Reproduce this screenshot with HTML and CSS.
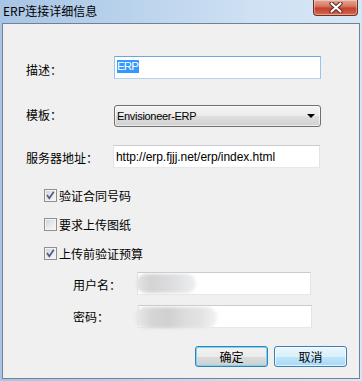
FILE: index.html
```html
<!DOCTYPE html>
<html>
<head>
<meta charset="utf-8">
<link rel="stylesheet" href="styles.css">
</head>
<body>
<div class="window">
  <div class="titlebar">
    <span class="title">ERP连接详细信息</span>
    <span class="close">
      <svg width="14" height="11" viewBox="0 0 14 11">
        <path d="M2.5 1.5 L11.5 9.5 M11.5 1.5 L2.5 9.5" stroke="#5a2a22" stroke-width="4.2" stroke-linecap="round" fill="none"/>
        <path d="M2.5 1.5 L11.5 9.5 M11.5 1.5 L2.5 9.5" stroke="#ffffff" stroke-width="2.2" stroke-linecap="round" fill="none"/>
      </svg>
    </span>
  </div>
  <div class="client">
    <div class="row r-desc">
      <span class="lbl w88 lbl-down">描述：</span>
      <div class="input focus w207"><span class="selected">ERP</span></div>
    </div>
    <div class="row r-tpl">
      <span class="lbl w88 lbl-up">模板：</span>
      <div class="combo">
        <span class="combo-text">Envisioneer-ERP</span>
        <span class="arrow"></span>
      </div>
    </div>
    <div class="row r-url">
      <span class="lbl w87 lbl-down1">服务器地址：</span>
      <div class="input w207 plain"><span class="url">http://erp.fjjj.net/erp/index.html</span></div>
    </div>
    <div class="row chk r-c1">
      <span class="cb">
        <svg width="11" height="11" viewBox="0 0 11 11"><path d="M2 5 L4.3 8.2 L8.8 1.8" stroke="#4b5c88" stroke-width="1.7" fill="none"/></svg>
      </span>
      <span class="chk-text">验证合同号码</span>
    </div>
    <div class="row chk r-c2">
      <span class="cb"></span>
      <span class="chk-text">要求上传图纸</span>
    </div>
    <div class="row chk r-c3">
      <span class="cb">
        <svg width="11" height="11" viewBox="0 0 11 11"><path d="M2 5 L4.3 8.2 L8.8 1.8" stroke="#4b5c88" stroke-width="1.7" fill="none"/></svg>
      </span>
      <span class="chk-text">上传前验证预算</span>
    </div>
    <div class="row r-user">
      <span class="lbl w64 lbl-down1">用户名：</span>
      <div class="input w174 plain"><span class="blur blur-user"></span></div>
    </div>
    <div class="row r-pass">
      <span class="lbl w65">密码：</span>
      <div class="input w174 plain"><span class="blur blur-pass"></span></div>
    </div>
    <div class="row r-btns">
      <span class="btn btn-ok">确定</span>
      <span class="btn btn-cancel">取消</span>
    </div>
  </div>
</div>
</body>
</html>
```

FILE: styles.css
```css
* { box-sizing: border-box; }
html, body { margin: 0; padding: 0; }
body {
  width: 362px;
  height: 381px;
  overflow: hidden;
  font-family: "Noto Sans CJK SC", "Liberation Sans", sans-serif;
  font-size: 12px;
  color: #000;
  background: #c3d8ee;
}
.window {
  width: 362px;
  height: 381px;
  display: flex;
  flex-direction: column;
  background: linear-gradient(90deg, #a8c5e5 0%, #b9d2ec 35%, #cfe1f3 70%, #d6e6f5 100%);
}
.titlebar {
  height: 23px;
  flex: none;
  display: flex;
  justify-content: space-between;
  align-items: flex-start;
}
.title {
  padding: 3px 0 0 3px;
  line-height: 16px;
  font-size: 12px;
  color: #000;
}
.close {
  width: 45px;
  height: 16px;
  margin-right: 4px;
  border: 1px solid #6e2f25;
  border-top: none;
  border-radius: 0 0 4px 4px;
  background: linear-gradient(#e6a596 0%, #d77a66 40%, #c3432b 55%, #cf5a40 85%, #d97058 100%);
  box-shadow: inset 0 0 0 1px rgba(255, 255, 255, 0.35);
  display: flex;
  align-items: center;
  justify-content: center;
  padding-bottom: 1px;
}
.client {
  flex: none;
  height: 356px;
  margin: 0 2px;
  border: 1px solid #6f8299;
  background: #f0f0f0;
  display: flex;
  flex-direction: column;
}
.row {
  display: flex;
  align-items: center;
  flex: none;
}
.lbl { flex: none; line-height: 16px; }
.lbl-down { padding-top: 4px; }
.lbl-down1 { padding-top: 2px; }
.lbl-up { padding-bottom: 3px; }
.w88 { width: 88px; }
.w87 { width: 87px; }
.w64 { width: 64px; }
.w65 { width: 65px; }
.w207 { width: 207px; }
.w174 { width: 174px; }

.r-desc { margin-top: 32px; height: 23px; padding-left: 23px; }
.r-tpl { margin-top: 26px; height: 22px; padding-left: 23px; }
.r-url { margin-top: 18px; height: 23px; padding-left: 23px; }
.chk { height: 17px; padding-left: 41px; }
.r-c1 { margin-top: 19px; }
.r-c2 { margin-top: 12px; }
.r-c3 { margin-top: 12px; }
.r-user { margin-top: 10px; height: 23px; padding-left: 70px; }
.r-pass { margin-top: 10px; height: 23px; padding-left: 70px; }
.r-btns { margin-top: 18px; height: 21px; justify-content: flex-end; padding-right: 12px; gap: 6px; }

.input {
  position: relative;
  height: 23px;
  background: #fff;
  border: 1px solid;
  display: flex;
  align-items: center;
  padding-left: 2px;
  font-family: "Liberation Sans", sans-serif;
  color: #000;
}
.plain { border-color: #c9cbd0 #e2e3e6 #e6e8eb #e2e3e6; }
.focus { border-color: #6fa6dc #9cc4ea #b3d3f0 #9cc4ea; }
.selected {
  background: #3399ff;
  color: #fff;
  font-size: 11.5px;
  letter-spacing: -0.9px;
  line-height: 13px;
  padding: 0 1px 0 0;
  margin-top: -3px;
}
.url { font-size: 12px; letter-spacing: -0.05px; }

.combo {
  width: 207px;
  height: 22px;
  border: 1px solid #707070;
  border-radius: 3px;
  background: linear-gradient(#f3f3f3 0%, #ececec 50%, #dfdfdf 50%, #d1d1d1 100%);
  box-shadow: inset 0 0 0 1px rgba(255, 255, 255, 0.6);
  display: flex;
  align-items: center;
  padding: 0 5px 0 2px;
  font-family: "Liberation Sans", sans-serif;
}
.combo-text { font-size: 11px; letter-spacing: -0.3px; }
.arrow {
  margin-left: auto;
  width: 0;
  height: 0;
  border-left: 4px solid transparent;
  border-right: 4px solid transparent;
  border-top: 4px solid #000;
  margin-right: 0;
}

.cb {
  width: 13px;
  height: 13px;
  flex: none;
  border: 1px solid #8e8f8f;
  background: linear-gradient(135deg, #cdd0d5 0%, #e9eaec 55%, #f8f8f8 100%);
  box-shadow: inset 0 0 0 1px #f4f4f4;
  display: flex;
  align-items: center;
  justify-content: center;
}
.chk-text { padding-left: 2px; line-height: 16px; }

.blur {
  position: absolute;
  border-radius: 10px;
  filter: blur(1.5px);
}
.blur-user {
  left: -2px;
  top: 1px;
  width: 60px;
  height: 19px;
  background: linear-gradient(90deg, #e4e4e4 0%, #d3d3d3 25%, #d9d9d9 45%, #dedfe2 65%, #efefef 100%);
}
.blur-pass {
  left: -4px;
  top: 1px;
  width: 82px;
  height: 21px;
  background: linear-gradient(90deg, #e9e9e9 0%, #d6d6d6 20%, #d0d0d0 40%, #dcdcdc 60%, #e3e3e3 80%, #f2f2f2 100%);
}

.btn {
  width: 73px;
  height: 21px;
  border: 1px solid #3c7fb1;
  border-radius: 3px;
  display: flex;
  align-items: center;
  justify-content: center;
  font-size: 12px;
  line-height: 16px;
}
.btn-ok {
  background: linear-gradient(#f2f2f2 0%, #ebebeb 50%, #dddddd 50%, #cfcfcf 100%);
  box-shadow: inset 0 0 0 1px #6fd8f7;
}
.btn-cancel {
  background: linear-gradient(#eaf6fd 0%, #d9f0fc 50%, #bee6fd 50%, #a7d9f5 100%);
  box-shadow: inset 0 0 0 1px rgba(255, 255, 255, 0.7);
}
```
